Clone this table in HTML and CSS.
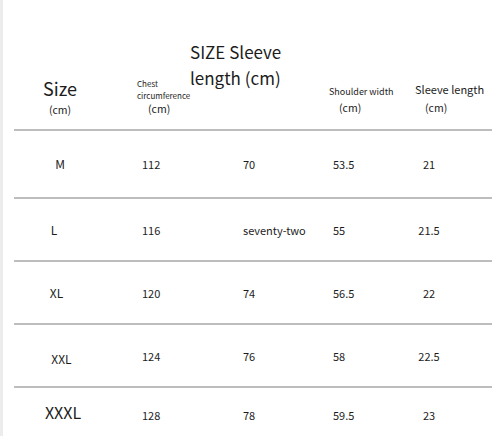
FILE: index.html
```html
<!DOCTYPE html>
<html>
<head>
<meta charset="utf-8">
<link rel="stylesheet" href="styles.css">
</head>
<body>
<div class="page">
  <div class="table">
    <div class="head">
      <div class="h h1"><div class="big">Size</div><div class="cm cm1">(cm)</div></div>
      <div class="h h2"><div class="tiny">Chest</div><div class="tiny">circumference</div><div class="cm cm2">(cm)</div></div>
      <div class="h h3"><div class="title">SIZE Sleeve length (cm)</div></div>
      <div class="h h4"><div class="small">Shoulder width</div><div class="cm cm4">(cm)</div></div>
      <div class="h h5"><div class="mid">Sleeve length</div><div class="cm cm5">(cm)</div></div>
    </div>
    <div class="row first">
      <div class="c c1">M</div><div class="c c2">112</div><div class="c c3">70</div><div class="c c4">53.5</div><div class="c c5">21</div>
    </div>
    <div class="row">
      <div class="c c1 l">L</div><div class="c c2">116</div><div class="c c3">seventy-two</div><div class="c c4">55</div><div class="c c5">21.5</div>
    </div>
    <div class="row">
      <div class="c c1 xl">XL</div><div class="c c2">120</div><div class="c c3">74</div><div class="c c4">56.5</div><div class="c c5">22</div>
    </div>
    <div class="row">
      <div class="c c1 xxl">XXL</div><div class="c c2">124</div><div class="c c3">76</div><div class="c c4">58</div><div class="c c5">22.5</div>
    </div>
    <div class="row last">
      <div class="c c1 xxxl">XXXL</div><div class="c c2">128</div><div class="c c3">78</div><div class="c c4">59.5</div><div class="c c5">23</div>
    </div>
  </div>
</div>
</body>
</html>
```
FILE: styles.css
```css
html, body {
  margin: 0;
  padding: 0;
  background: #fff;
}
body {
  font-family: "Noto Sans CJK SC", "Noto Sans", sans-serif;
  color: #1c1c1c;
}
.page {
  width: 500px;
  height: 436px;
  box-sizing: border-box;
  border-left: 3px solid #ececec;
  padding-left: 11px;
  overflow: hidden;
}
.table {
  width: 478px;
}
.head, .row {
  display: grid;
  grid-template-columns: 111px 60px 135px 85px 87px;
}
.head {
  height: 129px;
  border-bottom: 2px solid #bdbdbd;
  align-items: start;
}
.h1 {
  padding-top: 78px;
  padding-right: 19px;
  text-align: center;
}
.big {
  font-size: 18px;
  line-height: 20px;
}
.cm {
  font-size: 10.5px;
  line-height: 14px;
}
.cm1 {
  margin-top: 5px;
}
.h2 {
  padding-top: 78px;
  padding-left: 12px;
  white-space: nowrap;
}
.tiny {
  font-size: 8px;
  line-height: 12px;
}
.cm2 {
  padding-left: 11px;
  line-height: 13px;
}
.h3 {
  padding-top: 39px;
  padding-left: 5px;
}
.title {
  font-size: 17px;
  line-height: 26px;
  width: 100px;
}
.h4 {
  padding-top: 85px;
  padding-left: 9px;
  white-space: nowrap;
}
.small {
  font-size: 9px;
  line-height: 14px;
}
.cm4 {
  padding-left: 10px;
  padding-top: 2px;
}
.h5 {
  padding-top: 81px;
  padding-left: 10px;
  white-space: nowrap;
}
.mid {
  font-size: 11px;
  line-height: 16px;
}
.cm5 {
  padding-left: 10px;
  padding-top: 4px;
}
.row {
  height: 61px;
  border-bottom: 2px solid #bdbdbd;
  align-items: center;
  font-size: 11px;
}
.row.first {
  height: 66px;
}
.row.last {
  height: 48px;
  border-bottom: none;
}
.c {
  white-space: nowrap;
  line-height: 16px;
}
.c1 {
  font-size: 12px;
  text-align: center;
  padding-right: 19px;
}
.c1.l { padding-right: 31px; }
.c1.xl { padding-right: 26px; }
.c1.xxl { padding-right: 16px; padding-top: 6px; }
.c1.xxxl { font-size: 16px; padding-right: 13px; }
.c2 {
  padding-left: 17px;
}
.c3 {
  padding-left: 58px;
}
.c4 {
  padding-left: 13px;
}
.c5 {
  text-align: center;
  padding-right: 39px;
}
.last .c2, .last .c3, .last .c4, .last .c5 {
  padding-top: 6px;
}
```
